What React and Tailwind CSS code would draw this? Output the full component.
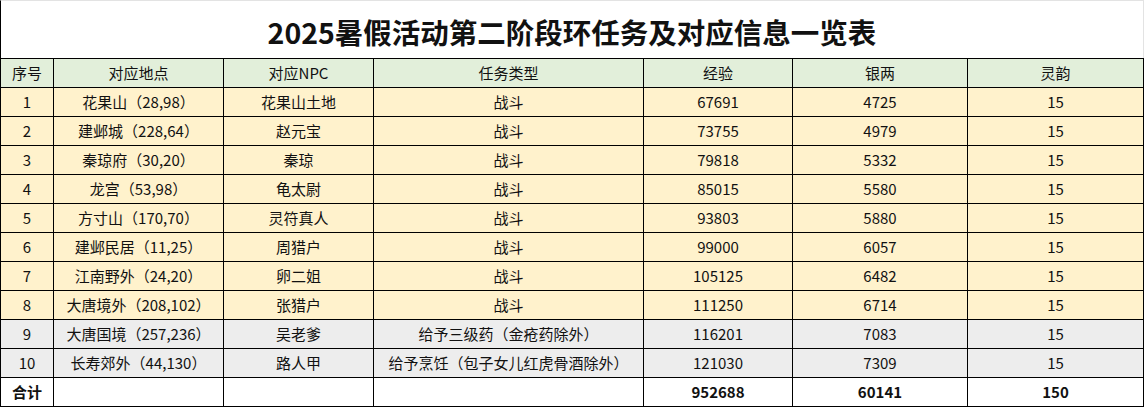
// 2025暑假活动第二阶段环任务及对应信息一览表 — spreadsheet-style table
const rows = [
  { no: 1, place: '花果山（28,98）', npc: '花果山土地', type: '战斗', exp: 67691, silver: 4725, ling: 15 },
  { no: 2, place: '建邺城（228,64）', npc: '赵元宝', type: '战斗', exp: 73755, silver: 4979, ling: 15 },
  { no: 3, place: '秦琼府（30,20）', npc: '秦琼', type: '战斗', exp: 79818, silver: 5332, ling: 15 },
  { no: 4, place: '龙宫（53,98）', npc: '龟太尉', type: '战斗', exp: 85015, silver: 5580, ling: 15 },
  { no: 5, place: '方寸山（170,70）', npc: '灵符真人', type: '战斗', exp: 93803, silver: 5880, ling: 15 },
  { no: 6, place: '建邺民居（11,25）', npc: '周猎户', type: '战斗', exp: 99000, silver: 6057, ling: 15 },
  { no: 7, place: '江南野外（24,20）', npc: '卵二姐', type: '战斗', exp: 105125, silver: 6482, ling: 15 },
  { no: 8, place: '大唐境外（208,102）', npc: '张猎户', type: '战斗', exp: 111250, silver: 6714, ling: 15 },
  { no: 9, place: '大唐国境（257,236）', npc: '吴老爹', type: '给予三级药（金疮药除外）', exp: 116201, silver: 7083, ling: 15 },
  { no: 10, place: '长寿郊外（44,130）', npc: '路人甲', type: '给予烹饪（包子女儿红虎骨酒除外）', exp: 121030, silver: 7309, ling: 15 },
]

const headers = ['序号', '对应地点', '对应NPC', '任务类型', '经验', '银两', '灵韵']

function Cell({ children, className = '' }) {
  return (
    <div className={`h-[29px] flex items-center justify-center border-r border-b border-black whitespace-nowrap ${className}`}>
      {children}
    </div>
  )
}

export default function App() {
  const totalExp = rows.reduce((s, r) => s + r.exp, 0)
  const totalSilver = rows.reduce((s, r) => s + r.silver, 0)
  const totalLing = rows.reduce((s, r) => s + r.ling, 0)

  return (
    <div
      className="w-[1144px] h-[407px] bg-white text-[#111] overflow-hidden"
      style={{ fontFamily: '"Noto Sans CJK SC", "Noto Sans", sans-serif' }}
    >
      {/* title */}
      <div className="h-[58px] border-t border-l border-r border-t-[#e3e3e3] border-l-black border-r-[#e3e3e3] flex items-center justify-center pt-[6px]">
        <h1 className="text-[28.5px] font-bold leading-none text-[#111]">2025暑假活动第二阶段环任务及对应信息一览表</h1>
      </div>

      {/* table */}
      <div className="grid grid-cols-[53px_170px_150px_270px_149px_175px_176px] border-t border-l border-black text-[15px]">
        {headers.map(h => (
          <Cell key={h} className="bg-[#e2efda]">{h}</Cell>
        ))}

        {rows.map(r => {
          const bg = r.no <= 8 ? 'bg-[#fff2cc]' : 'bg-[#ededed]'
          return [
            <Cell key={`${r.no}-a`} className={bg}>{r.no}</Cell>,
            <Cell key={`${r.no}-b`} className={bg}>{r.place}</Cell>,
            <Cell key={`${r.no}-c`} className={bg}>{r.npc}</Cell>,
            <Cell key={`${r.no}-d`} className={bg}>{r.type}</Cell>,
            <Cell key={`${r.no}-e`} className={bg}>{r.exp}</Cell>,
            <Cell key={`${r.no}-f`} className={bg}>{r.silver}</Cell>,
            <Cell key={`${r.no}-g`} className={bg}>{r.ling}</Cell>,
          ]
        })}

        <Cell className="font-bold">合计</Cell>
        <Cell />
        <Cell />
        <Cell />
        <Cell className="font-bold">{totalExp}</Cell>
        <Cell className="font-bold">{totalSilver}</Cell>
        <Cell className="font-bold">{totalLing}</Cell>
      </div>
    </div>
  )
}
